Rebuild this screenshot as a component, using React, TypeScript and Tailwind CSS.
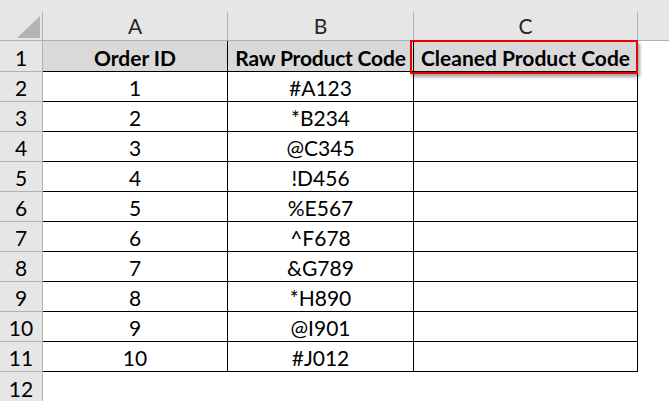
import React from "react";

const rows: [string, string][] = [
  ["1", "#A123"],
  ["2", "*B234"],
  ["3", "@C345"],
  ["4", "!D456"],
  ["5", "%E567"],
  ["6", "^F678"],
  ["7", "&G789"],
  ["8", "*H890"],
  ["9", "@I901"],
  ["10", "#J012"],
];

const font = { fontFamily: "Lato, 'Liberation Sans', sans-serif" };

export default function App() {
  return (
    <div
      className="relative w-[669px] h-[401px] overflow-hidden bg-white text-black text-[21px] leading-none"
      style={font}
    >
      {/* column header band */}
      <div className="flex h-[41px] bg-[#e6e6e6] border-b border-[#b1b1b1]">
        <div className="w-[43px] shrink-0 pt-[12px]">
          <div className="h-full border-r border-[#b1b1b1] relative">
            <svg className="absolute left-[17px] top-[4px]" width="23" height="22" viewBox="0 0 23 22">
              <polygon points="23,0 23,22 0,22" fill="#b4b4b4" />
            </svg>
          </div>
        </div>
        {[
          ["A", "w-[185px]"],
          ["B", "w-[186px]"],
          ["C", "w-[224px]"],
        ].map(([l, w]) => (
          <div key={l} className={`${w} shrink-0 pt-[12px]`}>
            <div className="h-full border-r border-[#b1b1b1] flex items-center justify-center pb-[1px] text-[#262626]">
              {l}
            </div>
          </div>
        ))}
        <div className="flex-1" />
      </div>

      {/* row 1 header */}
      <div className="flex h-[31px]">
        <div className="w-[43px] shrink-0 bg-[#e6e6e6] border-r border-b border-[#b1b1b1] flex items-center justify-center pt-[2px]">
          1
        </div>
        <div className="w-[185px] shrink-0 bg-[#d9d9d9] border-r border-b border-black flex items-center justify-center font-bold pt-[2px]">
          Order ID
        </div>
        <div className="w-[186px] shrink-0 bg-[#d9d9d9] border-r border-b border-black flex items-center justify-center font-bold pt-[2px] tracking-[-0.2px]">
          Raw Product Code
        </div>
        <div className="w-[224px] shrink-0 bg-[#d9d9d9] border-r border-b border-black flex items-center justify-center font-bold pt-[2px]">
          Cleaned Product Code
        </div>
        <div className="flex-1" />
      </div>

      {rows.map(([id, code], i) => (
        <div key={id} className="flex h-[30px]">
          <div className="w-[43px] shrink-0 bg-[#e6e6e6] border-r border-b border-[#b1b1b1] flex items-center justify-center pt-[2px]">
            {i + 2}
          </div>
          <div className="w-[185px] shrink-0 border-r border-b border-black flex items-center justify-center pt-[2px]">
            {id}
          </div>
          <div className="w-[186px] shrink-0 border-r border-b border-black flex items-center justify-center pt-[2px]">
            {code}
          </div>
          <div className="w-[224px] shrink-0 border-r border-b border-black" />
          <div className="flex-1" />
        </div>
      ))}

      <div className="flex h-[30px]">
        <div className="w-[43px] shrink-0 bg-[#e6e6e6] border-r border-[#b1b1b1] flex items-center justify-center pt-[2px]">
          12
        </div>
        <div className="flex-1" />
      </div>

      {/* highlight box */}
      <div className="absolute left-[410px] top-[40px] w-[228px] h-[34px] border-2 border-[#ee0000] shadow-[2px_3px_3px_rgba(0,0,0,0.35)] pointer-events-none" />
    </div>
  );
}
